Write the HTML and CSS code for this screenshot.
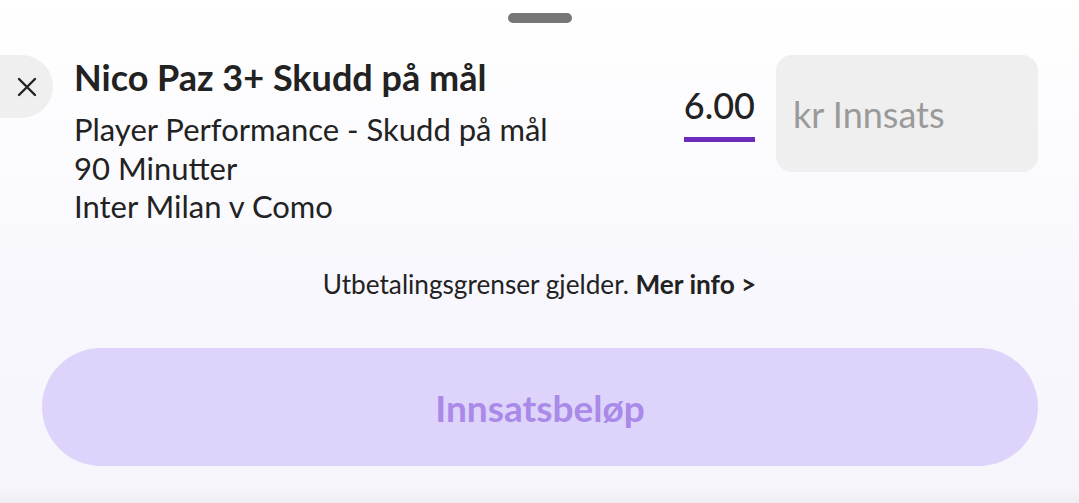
FILE: index.html
```html
<!DOCTYPE html>
<html lang="no">
<head>
<meta charset="utf-8">
<link rel="stylesheet" href="styles.css">
</head>
<body>
<div class="sheet">
  <div class="handle-row"><div class="handle"></div></div>
  <div class="bet">
    <button class="close" aria-label="Lukk">
      <svg width="20" height="20" viewBox="0 0 20 20"><path d="M2 2L18 18M18 2L2 18" stroke="#222" stroke-width="2.4" stroke-linecap="round"/></svg>
    </button>
    <div class="info">
      <div class="title">Nico Paz 3+ Skudd på mål</div>
      <div class="line">Player Performance - Skudd på mål</div>
      <div class="line">90 Minutter</div>
      <div class="line">Inter Milan v Como</div>
    </div>
    <div class="odds">6.00</div>
    <div class="stake">kr Innsats</div>
  </div>
  <div class="limits">Utbetalingsgrenser gjelder. <b>Mer info &gt;</b></div>
  <div class="btn-row"><button class="place">Innsatsbeløp</button></div>
  <div class="bottom"></div>
</div>
</body>
</html>
```

FILE: styles.css
```css
* { box-sizing: border-box; }
html, body { margin: 0; padding: 0; }
body {
  width: 1079px;
  height: 503px;
  overflow: hidden;
  font-family: Lato, "Noto Sans", sans-serif;
  color: #222;
}
.sheet {
  height: 503px;
  background: linear-gradient(#ffffff, #f8f7fd 60%, #f7f5fc);
  display: flex;
  flex-direction: column;
}
.handle-row {
  display: flex;
  justify-content: center;
  padding-top: 13px;
  height: 55px;
  flex: none;
}
.handle {
  width: 64px;
  height: 10px;
  border-radius: 5px;
  background: #777;
}
.bet {
  display: flex;
  align-items: flex-start;
  height: 180px;
  flex: none;
}
.close {
  width: 53px;
  height: 63px;
  border: 0;
  margin: 0;
  padding: 0;
  background: #efefef;
  border-radius: 0 32px 32px 0;
  display: flex;
  align-items: center;
  justify-content: center;
  flex: none;
}
.close svg { margin-left: 1px; }
.info {
  margin-left: 21px;
  flex: 1;
}
.title {
  font-weight: 700;
  font-size: 36px;
  line-height: 44px;
  margin-bottom: 11px;
}
.line {
  font-size: 31px;
  line-height: 38.5px;
}
.odds {
  margin-top: 29px;
  font-size: 36px;
  line-height: 43px;
  font-weight: 500;
  padding: 0 0 10px;
  border-bottom: 5px solid #6c2bbd;
}
.stake {
  margin-left: 21px;
  margin-right: 41px;
  width: 262px;
  height: 117px;
  border-radius: 16px;
  background: #efefef;
  color: #9a9a9a;
  font-size: 36px;
  padding-left: 17px;
  display: flex;
  align-items: center;
}
.limits {
  text-align: center;
  font-size: 26.2px;
  line-height: 30px;
  margin-top: 34px;
  flex: none;
}
.limits b { font-weight: 700; }
.btn-row {
  padding: 0 41px 0 42px;
  margin-top: 49px;
  flex: none;
}
.place {
  display: block;
  width: 100%;
  height: 118px;
  border: 0;
  border-radius: 59px;
  background: #ddd3fb;
  color: #a98ae8;
  font-family: Lato, "Noto Sans", sans-serif;
  font-weight: 700;
  font-size: 37px;
  padding: 0;
}
.bottom {
  margin-top: auto;
  height: 13px;
  background: linear-gradient(#f5f4f9, #eeedf2);
}
```
